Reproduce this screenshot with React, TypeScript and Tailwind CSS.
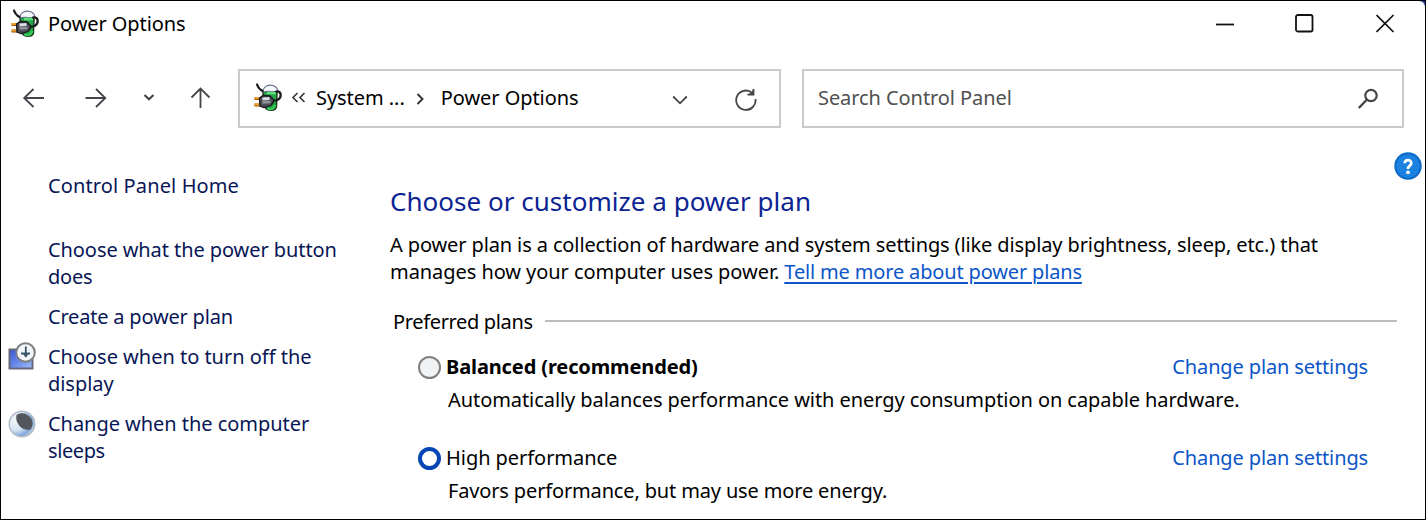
import type { ReactNode } from "react";

function PowerIcon() {
  return (
    <svg width="29" height="30" viewBox="0 0 29 30" fill="none" className="shrink-0">
      <path d="M9 10 C10 6 22 6 23 10 L22.500 24 C21 28.500 13 28.500 11 24 Z" fill="#22a844" stroke="#16351c" strokeWidth="1.400" />
      <path d="M9 9 C9 0 23 0 24 8 C20 9.500 14 7.500 9 9Z" fill="#f4f6fb" stroke="#67718c" strokeWidth="1.200" />
      <path d="M13 10 H22" stroke="#5fe07c" strokeWidth="2.500" />
      <path d="M13.500 25.500 C17 27 20 26 21.500 22" stroke="#38d058" strokeWidth="2" />
      <path d="M3 1.500 C4 4.500 6 6.500 8.500 8 M22 8.500 C28 8 28 14.500 23.500 17 L19 18" stroke="#1c1c20" strokeWidth="2.200" strokeLinecap="round" />
      <path d="M.5 15.500 H7 M.5 22 H7" stroke="#94590c" strokeWidth="3" />
      <path d="M.5 15 H6 M.5 21.500 H6" stroke="#f0a02c" strokeWidth="1.800" />
      <path d="M5.500 15 L9 12.500 L16 13 L19.500 16.500 V19 L17 22.500 L10 24.500 L6 23 Z" fill="#4b4b53" stroke="#17171b" strokeWidth="1.300" />
      <path d="M8.500 16 L15.500 15.500" stroke="#dedee6" strokeWidth="3" />
      <path d="M8.500 19.500 L16.500 19" stroke="#92929c" strokeWidth="2.500" />
    </svg>
  );
}

function DisplayIcon() {
  return (
    <svg width="28" height="28" viewBox="0 0 28 28" fill="none" className="ml-[2px] mt-[-1px] shrink-0">
      <defs>
        <linearGradient id="screen" x1="0" y1="0" x2="1" y2="1">
          <stop stopColor="#3455d8" />
          <stop offset="1" stopColor="#9dbcfb" />
        </linearGradient>
      </defs>
      <rect x="1.500" y="7.500" width="23" height="19" fill="url(#screen)" stroke="#66687a" strokeWidth="2" />
      <circle cx="17.500" cy="10.500" r="9.300" fill="#f3f6f8" stroke="#7d7f83" strokeWidth="2" />
      <path d="M17.800 4.500 V15 M13 11.500 H22" stroke="#3a5568" strokeWidth="1.800" />
      <path d="M15 12 H20.500 L17.800 15.500Z" fill="#3a5568" />
    </svg>
  );
}

function MoonIcon() {
  return (
    <svg width="28" height="28" viewBox="0 0 28 28" fill="none" className="ml-[2px] shrink-0">
      <defs>
        <radialGradient id="moon" cx=".25" cy=".35" r=".8">
          <stop stopColor="#f4f6f9" />
          <stop offset=".5" stopColor="#d3e2f3" />
          <stop offset=".8" stopColor="#7ea8dc" />
          <stop offset="1" stopColor="#c9d5e3" />
        </radialGradient>
      </defs>
      <circle cx="14" cy="14" r="12.800" fill="url(#moon)" stroke="#b4bac4" strokeWidth="1.400" />
      <path d="M8.500 5 C13 2 20 3 23.500 9 C25.500 13 24.500 17 22.500 19.500 C18 20.500 14 19 11.500 16 C9 13 7.500 9 8.500 5Z" fill="#54565e" />
    </svg>
  );
}

function SideLink({ icon, children }: { icon?: ReactNode; children: ReactNode }) {
  return (
    <a className="flex items-start">
      <span className="w-[42px] shrink-0">{icon}</span>
      <span>{children}</span>
    </a>
  );
}

function Plan({ radio, name, description }: { radio: string; name: ReactNode; description: ReactNode }) {
  return (
    <div className="pl-7">
      <div className="flex items-center">
        <span className={`mt-[2px] size-[23px] shrink-0 rounded-full ${radio}`} />
        <span className="ml-[5px] flex-1">{name}</span>
        <a className="mr-[57px] tracking-[-0.13px] text-[#0b55c8]">Change plan settings</a>
      </div>
      <div className="mt-[6px] pl-[30px]">{description}</div>
    </div>
  );
}

export default function App() {
  return (
    <div className="h-[520px] w-[1426px] overflow-hidden border border-black bg-[#1d3f9a]">
      <div className="flex h-full flex-col whitespace-nowrap rounded-tr-[6px] bg-white font-['Noto_Sans',sans-serif] text-[20px] leading-[27px] text-black">
        <header className="flex h-[45px] items-center pl-[10px]">
          <PowerIcon />
          <h1 className="ml-[8px] flex-1 tracking-[-0.08px]">Power Options</h1>
          <svg width="19" height="20" viewBox="0 0 19 20" fill="none" stroke="#111" strokeWidth="1.8" className="mr-[60px]">
            <path d="M0 10.500 H18" />
          </svg>
          <svg width="19" height="20" viewBox="0 0 19 20" fill="none" stroke="#111" strokeWidth="1.8" className="mr-[62px]">
            <rect x="1" y="1" width="16.500" height="16.500" rx="1.800" />
          </svg>
          <svg width="19" height="20" viewBox="0 0 19 20" fill="none" stroke="#111" strokeWidth="1.700" className="mr-[30px]">
            <path d="M.5 1 L17.500 18 M17.500 1 L.5 18" />
          </svg>
        </header>

        <nav className="mt-[23px] flex h-[59px] items-center">
          <svg width="237" height="30" viewBox="0 0 237 30" fill="none" stroke="#45454a" strokeWidth="1.800" className="mt-[-1px] shrink-0">
            <path d="M43 15 H23 M32.500 6 L23.200 15 L32.500 24" />
            <path d="M84.500 15 H104.500 M95 6 L104.300 15 L95 24" />
            <path d="M143.500 12 L148 16.300 L152.500 12" strokeWidth="2.200" />
            <path d="M199.500 25 V5.500 M190.500 14.500 L199.500 5.500 L208.500 14.500" />
          </svg>
          <div className="flex h-full w-[543px] items-center border-2 border-[#cacaca] pb-[2px] pl-[14px]">
            <PowerIcon />
            <svg width="15" height="14" viewBox="0 0 15 14" fill="none" stroke="#333" strokeWidth="1.600" className="ml-[8px]">
              <path d="M6.500 2 L2 6.500 L6.500 11 M13.500 2 L9 6.500 L13.500 11" />
            </svg>
            <span className="ml-[10px] tracking-[-0.05px]">System ...</span>
            <svg width="8" height="14" viewBox="0 0 8 14" fill="none" stroke="#333" strokeWidth="1.900" className="ml-[11px] mt-[2px]">
              <path d="M1.500 2 L6.500 7 L1.500 12" />
            </svg>
            <span className="ml-[17px] flex-1 tracking-[-0.06px]">Power Options</span>
            <svg width="16" height="10" viewBox="0 0 16 10" fill="none" stroke="#45454a" strokeWidth="1.800" className="mt-[4px]">
              <path d="M1.200 1.500 L8 8.300 L14.800 1.500" />
            </svg>
            <svg width="22" height="24" viewBox="0 0 22 24" fill="none" stroke="#45454a" strokeWidth="1.800" className="ml-[47px] mr-[22px] mt-[4px]">
              <path d="M20.500 11 A9.700 9.700 0 1 1 16 4 M18.500 1 V6.700 H12.500" />
              <path d="M14.500 5.500 L18.500 2 V6.700 Z" fill="#45454a" strokeWidth=".5" />
            </svg>
          </div>
          <div className="ml-[21px] flex h-full w-[602px] items-center border-2 border-[#cacaca] pb-[2px] pl-[14px] text-[#505050]">
            <span className="flex-1 tracking-[-0.07px]">Search Control Panel</span>
            <svg width="22" height="22" viewBox="0 0 22 22" fill="none" stroke="#45454a" className="mr-[23px] mt-[3px]">
              <circle cx="14" cy="7.500" r="5.700" strokeWidth="2.200" />
              <path d="M10 11.500 L1.800 20" strokeWidth="2.400" />
            </svg>
          </div>
        </nav>

        <div className="flex min-h-0 flex-1">
          <aside className="w-[389px] shrink-0 pl-[5px] pt-[44px] text-[#081656]">
            <SideLink><span className="tracking-[0.120px]">Control Panel Home</span></SideLink>
            <div className="mt-[37px] flex flex-col gap-[13px]">
              <SideLink>
                <span className="tracking-[-0.080px]">Choose what the power button</span><br />
                <span className="tracking-[-0.200px]">does</span>
              </SideLink>
              <SideLink><span className="tracking-[-0.200px]">Create a power plan</span></SideLink>
              <SideLink icon={<DisplayIcon />}>
                <span className="tracking-[-0.020px]">Choose when to turn off the</span><br />
                <span className="tracking-[-0.050px]">display</span>
              </SideLink>
              <SideLink icon={<MoonIcon />}>
                <span className="tracking-[-0.040px]">Change when the computer</span><br />
                <span className="tracking-[-0.400px]">sleeps</span>
              </SideLink>
            </div>
          </aside>

          <main className="relative flex-1 pt-[54px]">
            <svg width="28" height="28" viewBox="0 0 28 28" className="absolute right-[3px] top-[24px]">
              <circle cx="14" cy="14" r="13.700" fill="#0f6bcb" />
              <circle cx="14" cy="14" r="11.500" fill="#1b83df" />
              <path d="M10.700 11.300 C10.700 7 17.300 7 17.300 11 C17.300 13.800 14 13.500 14 17" fill="none" stroke="#fff" strokeWidth="2.700" />
              <circle cx="14" cy="20.300" r="1.900" fill="#fff" />
            </svg>
            <h2 className="text-[26px] leading-[38px] tracking-[0.020px] text-[#0b2491]">Choose or customize a power plan</h2>
            <p className="mt-[11px]">
              <span className="tracking-[-0.120px]">A power plan is a collection of hardware and system settings (like display brightness, sleep, etc.) that</span>
              <br />
              <span className="tracking-[-0.060px]">manages how your computer uses power. </span>
              <a className="tracking-[-0.160px] text-[#0b55c8] underline decoration-2 underline-offset-[3px]">Tell me more about power plans</a>
            </p>
            <div className="mt-[23px] flex items-center pl-[3px]">
              <span className="tracking-[-0.350px]">Preferred plans</span>
              <span className="ml-[12px] mr-[28px] mt-[-1px] h-[2px] flex-1 bg-[#bdbdbd]" />
            </div>
            <div className="mt-[18px] flex flex-col gap-[31px]">
              <Plan
                radio="border-2 border-[#808080] bg-[#f1f2f3]"
                name={<b className="font-bold tracking-[-0.120px]">Balanced (recommended)</b>}
                description={<span className="tracking-[-0.070px]">Automatically balances performance with energy consumption on capable hardware.</span>}
              />
              <Plan
                radio="border-4 border-[#0646b4] bg-white"
                name={<span className="tracking-[-0.050px]">High performance</span>}
                description={<span className="tracking-[-0.150px]">Favors performance, but may use more energy.</span>}
              />
            </div>
          </main>
        </div>
      </div>
    </div>
  );
}
